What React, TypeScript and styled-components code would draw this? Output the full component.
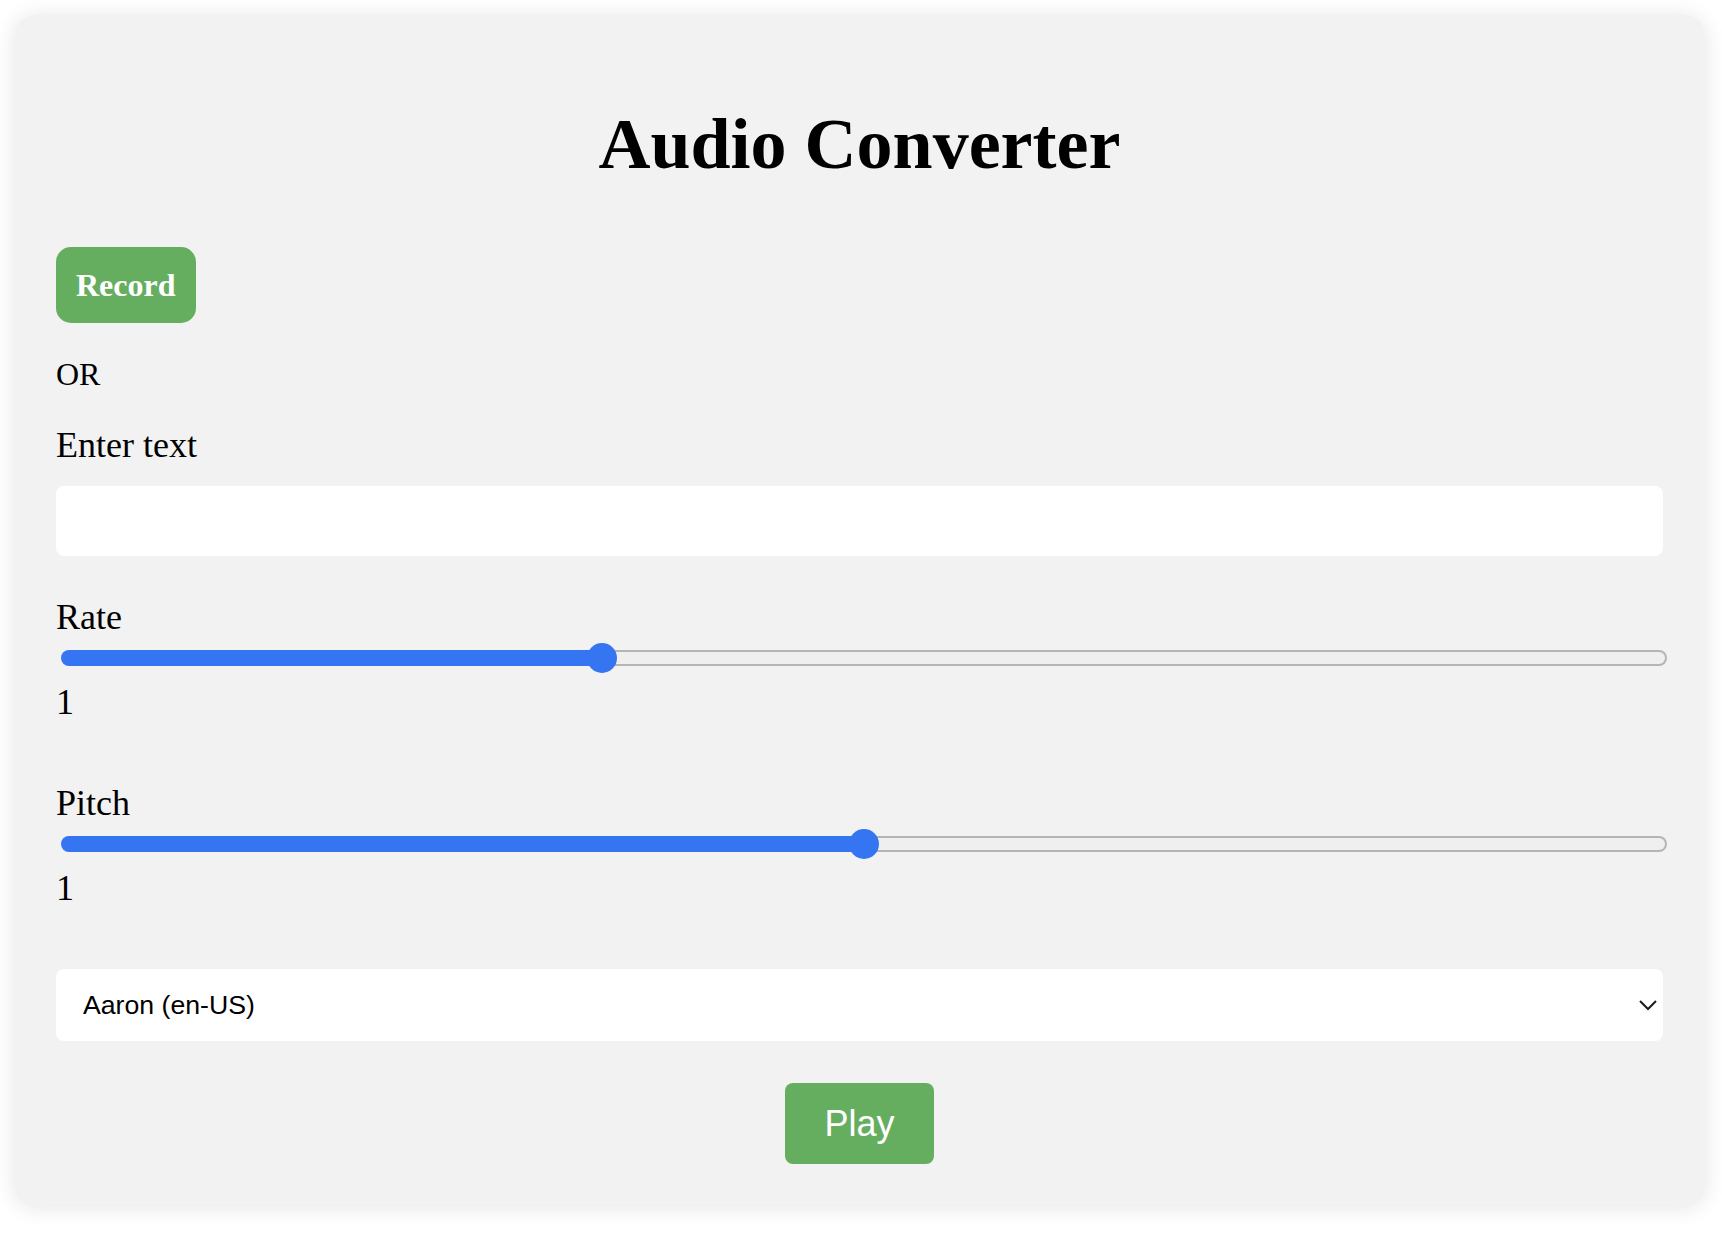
import React, { useState } from "react";
import styled, { createGlobalStyle } from "styled-components";

const GlobalStyle = createGlobalStyle`
  html, body {
    margin: 0;
    padding: 0;
    background: #ffffff;
  }
  body {
    font-family: "Liberation Serif", "Times New Roman", serif;
    color: #000;
  }
  * { box-sizing: border-box; }
`;

const Page = styled.div`
  padding: 15px 17px 46px 15px;
`;

const Card = styled.main`
  display: flex;
  flex-direction: column;
  align-items: stretch;
  background: #f2f2f2;
  border-radius: 20px;
  box-shadow: 0 2px 22px rgba(0, 0, 0, 0.11);
  padding: 89px 42px 41px 41px;
`;

const Title = styled.h1`
  margin: 0;
  font-size: 72px;
  line-height: 80px;
  font-weight: 700;
  text-align: center;
`;

const RecordButton = styled.button`
  align-self: flex-start;
  margin-top: 63px;
  border: none;
  border-radius: 15px;
  background: #66ae5f;
  color: #fff;
  font-family: "Liberation Serif", "Times New Roman", serif;
  font-weight: 700;
  font-size: 32px;
  line-height: 36px;
  padding: 20px 20px;
  cursor: pointer;
`;

const OrText = styled.p`
  margin: 33px 0 0;
  font-size: 32px;
  line-height: 36px;
`;

const Label = styled.label<{ $gap: number }>`
  display: block;
  margin-top: ${(p) => p.$gap}px;
  font-size: 36px;
  line-height: 40px;
`;

const TextInput = styled.input`
  display: block;
  margin-top: 21px;
  height: 70px;
  width: 100%;
  border: none;
  border-radius: 8px;
  background: #fff;
  padding: 0 24px;
  font-family: "Liberation Sans", Arial, sans-serif;
  font-size: 26.67px;
  outline: none;
`;

const Range = styled.input<{ $fill: number }>`
  -webkit-appearance: none;
  appearance: none;
  display: block;
  margin: 13px 0 0 5px;
  width: calc(100% - 1px);
  height: 16px;
  padding: 0;
  border: 2px solid transparent;
  border-radius: 8px;
  background:
    linear-gradient(
        to right,
        #3575f1 0,
        #3575f1 calc(17px + ${(p) => p.$fill} * (100% - 34px)),
        transparent 0
      )
      border-box,
    linear-gradient(#efefef, #efefef) padding-box,
    linear-gradient(#b5b5b5, #b5b5b5) border-box;
  outline: none;
  cursor: pointer;

  &::-webkit-slider-runnable-track {
    height: 12px;
    background: transparent;
    border: none;
  }

  &::-webkit-slider-thumb {
    -webkit-appearance: none;
    appearance: none;
    width: 30px;
    height: 30px;
    margin-top: -9px;
    border: none;
    border-radius: 50%;
    background: #3575f1;
  }
`;

const Value = styled.span`
  display: block;
  margin-top: 16px;
  font-size: 36px;
  line-height: 40px;
`;

const SelectWrap = styled.div`
  position: relative;
  margin-top: 61px;
`;

const VoiceSelect = styled.select`
  -webkit-appearance: none;
  appearance: none;
  display: block;
  width: 100%;
  height: 72px;
  border: none;
  border-radius: 8px;
  background: #fff;
  color: #000;
  padding: 0 60px 0 27px;
  font-family: "Liberation Sans", Arial, sans-serif;
  font-size: 26.67px;
  outline: none;
`;

const Chevron = styled.svg`
  position: absolute;
  right: 5px;
  top: 50%;
  transform: translateY(-50%);
  pointer-events: none;
`;

const PlayButton = styled.button`
  align-self: center;
  margin-top: 42px;
  border: none;
  border-radius: 8px;
  background: #66ae5f;
  color: #fff;
  font-family: "Liberation Sans", Arial, sans-serif;
  font-size: 36px;
  line-height: 41px;
  padding: 20px 39px;
  cursor: pointer;
`;

type SliderProps = {
  label: string;
  id: string;
  min: number;
  max: number;
  step: number;
  value: number;
  gap: number;
  onChange: (v: number) => void;
};

function Slider({ label, id, min, max, step, value, gap, onChange }: SliderProps) {
  const fill = (value - min) / (max - min);
  return (
    <>
      <Label htmlFor={id} $gap={gap}>
        {label}
      </Label>
      <Range
        id={id}
        type="range"
        min={min}
        max={max}
        step={step}
        value={value}
        $fill={fill}
        onChange={(e) => onChange(parseFloat(e.target.value))}
      />
      <Value>{value}</Value>
    </>
  );
}

export default function App() {
  const [rate, setRate] = useState(1);
  const [pitch, setPitch] = useState(1);
  const [text, setText] = useState("");

  return (
    <>
      <GlobalStyle />
      <Page>
        <Card>
          <Title>Audio Converter</Title>
          <RecordButton type="button">Record</RecordButton>
          <OrText>OR</OrText>
          <Label htmlFor="text" $gap={33}>
            Enter text
          </Label>
          <TextInput
            id="text"
            type="text"
            value={text}
            onChange={(e) => setText(e.target.value)}
          />
          <Slider
            label="Rate"
            id="rate"
            min={0.5}
            max={2}
            step={0.1}
            value={rate}
            gap={41}
            onChange={setRate}
          />
          <Slider
            label="Pitch"
            id="pitch"
            min={0}
            max={2}
            step={0.1}
            value={pitch}
            gap={61}
            onChange={setPitch}
          />
          <SelectWrap>
            <VoiceSelect defaultValue="Aaron">
              <option value="Aaron">Aaron (en-US)</option>
              <option value="Samantha">Samantha (en-US)</option>
              <option value="Daniel">Daniel (en-GB)</option>
            </VoiceSelect>
            <Chevron width="20" height="14" viewBox="0 0 20 14" aria-hidden="true">
              <path
                d="M2 3 L10 11 L18 3"
                fill="none"
                stroke="#1a1a1a"
                strokeWidth="2"
              />
            </Chevron>
          </SelectWrap>
          <PlayButton type="button">Play</PlayButton>
        </Card>
      </Page>
    </>
  );
}
